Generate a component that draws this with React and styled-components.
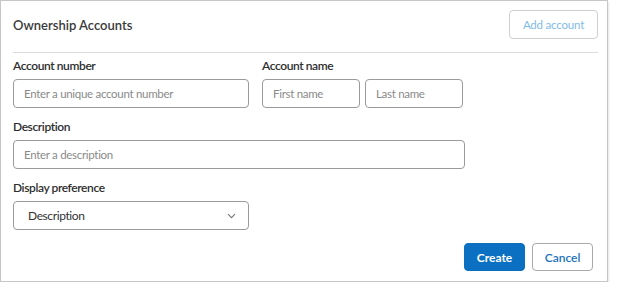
import React from "react";
import styled, { createGlobalStyle } from "styled-components";

const GlobalStyle = createGlobalStyle`
  body {
    margin: 0;
    background: #ffffff;
    font-family: Lato, "Open Sans", sans-serif;
    color: #333333;
  }
`;

const App = () => {
  return (
    <>
      <GlobalStyle />
      <Card>
        <Header>
          <Title>Ownership Accounts</Title>
          <GhostButton disabled>Add account</GhostButton>
        </Header>
        <Divider />
        <Row>
          <Field>
            <Label>Account number</Label>
            <Input $width={236} placeholder="Enter a unique account number" />
          </Field>
          <Field>
            <Label>Account name</Label>
            <Pair>
              <Input $width={98} placeholder="First name" />
              <Input $width={98} placeholder="Last name" />
            </Pair>
          </Field>
        </Row>
        <Field>
          <Label>Description</Label>
          <Input $width={452} placeholder="Enter a description" />
        </Field>
        <Field>
          <Label>Display preference</Label>
          <Select>
            <span>Description</span>
            <svg width="9" height="6" viewBox="0 0 9 6">
              <path d="M1 1.2l3.5 3.5 3.5-3.5" fill="none" stroke="#777" strokeWidth="1.1" />
            </svg>
          </Select>
        </Field>
        <Footer>
          <PrimaryButton>Create</PrimaryButton>
          <SecondaryButton>Cancel</SecondaryButton>
        </Footer>
      </Card>
    </>
  );
};

const Card = styled.div`
  box-sizing: border-box;
  width: 608px;
  height: 282px;
  border: 1px solid #c6c6c6;
  box-shadow: 0 2px 3px rgba(0, 0, 0, 0.18);
  padding: 9px 9px 0 12px;
  display: flex;
  flex-direction: column;
`;

const Header = styled.div`
  display: flex;
  justify-content: space-between;
  align-items: center;
  height: 29px;
`;

const Title = styled.div`
  font-size: 13px;
  font-weight: 600;
  color: #3a3a3a;
`;

const GhostButton = styled.button`
  box-sizing: border-box;
  width: 89px;
  height: 29px;
  border: 1px solid #cfcfcf;
  border-radius: 4px;
  background: #ffffff;
  color: #7fbbe6;
  font-family: Lato, sans-serif;
  font-size: 11.5px;
  letter-spacing: -0.2px;
  padding: 0;
`;

const Divider = styled.div`
  height: 1px;
  background: #dcdcdc;
  margin: 13px 0 5px;
  width: 585px;
`;

const Row = styled.div`
  display: flex;
  gap: 13px;
`;

const Field = styled.div`
  display: flex;
  flex-direction: column;
  margin-bottom: 11px;
`;

const Label = styled.div`
  font-size: 12px;
  font-weight: 600;
  letter-spacing: -0.4px;
  color: #2e2e2e;
  line-height: 15px;
  margin-bottom: 6px;
`;

const Pair = styled.div`
  display: flex;
  gap: 5px;
`;

const Input = styled.input`
  box-sizing: border-box;
  width: ${(p) => p.$width}px;
  height: 29px;
  border: 1px solid #9a9a9a;
  border-radius: 4px;
  padding: 0 10px;
  font-family: Lato, sans-serif;
  font-size: 11.5px;
  letter-spacing: -0.3px;
  color: #333;
  outline: none;

  &::placeholder {
    color: #8a8a8a;
  }
`;

const Select = styled.div`
  box-sizing: border-box;
  width: 236px;
  height: 29px;
  border: 1px solid #9a9a9a;
  border-radius: 4px;
  padding: 0 12px 0 14px;
  display: flex;
  align-items: center;
  justify-content: space-between;
  font-size: 12px;
  letter-spacing: -0.4px;
  color: #333;
`;

const Footer = styled.div`
  display: flex;
  gap: 7px;
  margin-top: 2px;
  padding-left: 451px;
`;

const BaseButton = styled.button`
  box-sizing: border-box;
  width: 61px;
  height: 28px;
  border-radius: 4px;
  font-family: Lato, sans-serif;
  font-size: 12px;
  font-weight: 700;
  padding: 0;
`;

const PrimaryButton = styled(BaseButton)`
  border: 1px solid #0b6fbf;
  background: #0b70c2;
  color: #ffffff;
`;

const SecondaryButton = styled(BaseButton)`
  border: 1px solid #a8a8a8;
  background: #ffffff;
  color: #1b72bd;
  font-weight: 600;
`;

export default App;
